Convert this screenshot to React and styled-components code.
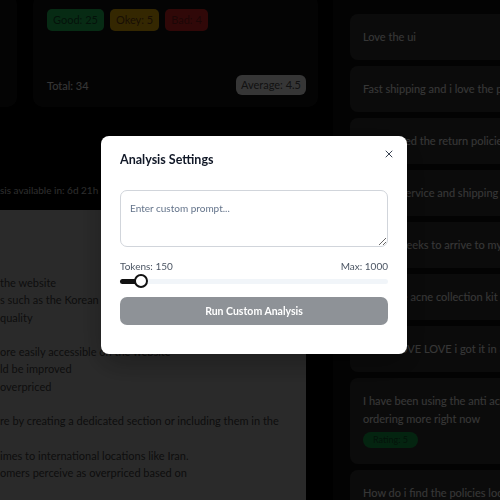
import React from 'react';
import styled, { createGlobalStyle } from 'styled-components';
import { X } from 'lucide-react';

const GlobalStyle = createGlobalStyle`
    html, body {
        margin: 0;
        padding: 0;
        background: #000;
    }
    body {
        font-family: Lato, "Noto Sans", sans-serif;
        overflow: hidden;
    }
`;

const Page = styled.div`
    display: flex;
    width: 500px;
    height: 500px;
    overflow: hidden;
    background: #000;
`;

const LeftColumn = styled.div`
    width: 333px;
    flex-shrink: 0;
    display: flex;
    flex-direction: column;
`;

const StatsRow = styled.div`
    display: flex;
    gap: 16px;
    margin-top: -5px;
    height: 112px;
    flex-shrink: 0;
`;

const Card = styled.div`
    background: #161616;
    border-radius: 10px;
    box-sizing: border-box;
`;

const SideCard = styled(Card)`
    width: 17px;
    border-radius: 0 10px 10px 0;
`;

const StatsCard = styled(Card)`
    width: 285px;
    padding: 14px 12px 12px 14px;
    display: flex;
    flex-direction: column;
    justify-content: space-between;
`;

const TagRow = styled.div`
    display: flex;
    gap: 6px;
`;

const tagColors = {
    good: ['#22c55e', '#14532d'],
    okey: ['#eab308', '#713f12'],
    bad: ['#dc2626', '#7f1d1d'],
};

const Tag = styled.span`
    height: 22px;
    line-height: 22px;
    padding: 0 6px;
    border-radius: 5px;
    font-size: 11px;
    background: ${p => tagColors[p.$kind][0]};
    color: ${p => tagColors[p.$kind][1]};
`;

const StatsFooter = styled.div`
    display: flex;
    justify-content: space-between;
    align-items: center;
`;

const Total = styled.span`
    font-size: 11px;
    color: #f5f5f5;
`;

const AverageBadge = styled.span`
    height: 20px;
    line-height: 20px;
    padding: 0 5px;
    border-radius: 6px;
    font-size: 11px;
    background: #f3f4f6;
    color: #525252;
`;

const NoticeRow = styled.div`
    height: 103px;
    box-sizing: border-box;
    display: flex;
    align-items: flex-end;
    padding-bottom: 13px;
    font-size: 10px;
    line-height: 14px;
    color: #cfcfcf;
    flex-shrink: 0;
`;

const ResultPanel = styled.div`
    width: 306px;
    flex: 1;
    background: #c0c0c0;
    border-top-right-radius: 10px;
    padding-top: 64px;
    box-sizing: border-box;
    font-size: 11px;
    line-height: 17.3px;
    color: #404040;
    white-space: nowrap;
    overflow: hidden;
`;

const ResultLine = styled.div`
    height: 17.3px;
`;

const RightColumn = styled.div`
    flex: 1;
    background: #101010;
    padding: 14px 0 0 17px;
    display: flex;
    flex-direction: column;
    gap: 6px;
    overflow: hidden;
`;

const ReviewCard = styled.div`
    flex-shrink: 0;
    width: 320px;
    box-sizing: border-box;
    padding: 14px 13px;
    border-radius: 8px;
    background: #333333;
    font-size: 11px;
    line-height: 18px;
    color: #fafafa;
    white-space: nowrap;
`;

const RatingBadge = styled.span`
    display: inline-block;
    margin: 4px 0 2px;
    height: 16px;
    line-height: 16px;
    padding: 0 10px;
    border-radius: 8px;
    font-size: 9px;
    background: #16a34a;
    color: #14532d;
`;

const Overlay = styled.div`
    position: fixed;
    inset: 0;
    background: rgba(0, 0, 0, 0.78);
    display: flex;
    align-items: center;
    justify-content: center;
    padding: 0 0 10px 8px;
    box-sizing: border-box;
`;

const Modal = styled.div`
    position: relative;
    width: 306px;
    box-sizing: border-box;
    padding: 16px 19px 29px;
    background: #fff;
    border-radius: 8px;
    box-shadow: 0 10px 30px rgba(0, 0, 0, .3);
`;

const CloseButton = styled.button`
    position: absolute;
    top: 12px;
    right: 12px;
    width: 12px;
    height: 12px;
    padding: 0;
    border: none;
    background: none;
    color: #374151;
    display: flex;
    cursor: pointer;
`;

const Title = styled.h2`
    margin: 0 0 22px;
    font-size: 12.5px;
    line-height: 16px;
    font-weight: 700;
    color: #111827;
`;

const PromptInput = styled.textarea`
    display: block;
    width: 100%;
    height: 57px;
    box-sizing: border-box;
    margin: 0 0 12px;
    padding: 10px 9px;
    border: 1px solid #d1d5db;
    border-radius: 7px;
    font-family: Lato, "Noto Sans", sans-serif;
    font-size: 10px;
    line-height: 14px;
    color: #111827;
    resize: vertical;
    outline: none;
    &::placeholder {
        color: #64748b;
    }
`;

const LabelRow = styled.div`
    display: flex;
    justify-content: space-between;
    font-size: 10px;
    line-height: 14px;
    color: #4b5563;
    margin-bottom: 1px;
`;

const TokenSlider = styled.input`
    display: block;
    width: 100%;
    height: 14px;
    margin: 0 0 9px;
    padding: 0;
    -webkit-appearance: none;
    appearance: none;
    background: transparent;
    &::-webkit-slider-runnable-track {
        height: 5px;
        border-radius: 3px;
        background: linear-gradient(to right, #111 0, #111 ${p => p.$fill}%, #f1f5f9 ${p => p.$fill}%, #f1f5f9 100%);
    }
    &::-webkit-slider-thumb {
        -webkit-appearance: none;
        width: 14px;
        height: 14px;
        margin-top: -4.5px;
        border-radius: 50%;
        border: 2px solid #111;
        background: #fff;
        box-sizing: border-box;
    }
`;

const RunButton = styled.button`
    display: block;
    width: 100%;
    height: 28px;
    border: none;
    border-radius: 7px;
    background: #8e9297;
    color: #fff;
    font-family: Lato, "Noto Sans", sans-serif;
    font-size: 10.5px;
    font-weight: 700;
`;

const resultLines = [
    'the website',
    's such as the Korean',
    'quality',
    '',
    'ore easily accessible on the website',
    'ld be improved',
    'overpriced',
    '',
    're by creating a dedicated section or including them in the',
    '',
    'imes to international locations like Iran.',
    'omers perceive as overpriced based on',
];

const reviews = [
    'Love the ui',
    'Fast shipping and i love the products',
    'I also loved the return policies',
    'Perfect service and shipping',
    'Took 2 weeks to arrive to my home',
    'I love the acne collection kit',
    'LOVE LOVE LOVE i got it in 3 days',
];

const App = () => {
    const tokens = 150;
    const min = 100;
    const max = 1000;
    const fill = 7.8;

    return (
        <>
            <GlobalStyle/>
            <Page>
                <LeftColumn>
                    <StatsRow>
                        <SideCard/>
                        <StatsCard>
                            <TagRow>
                                <Tag $kind="good">Good: 25</Tag>
                                <Tag $kind="okey">Okey: 5</Tag>
                                <Tag $kind="bad">Bad: 4</Tag>
                            </TagRow>
                            <StatsFooter>
                                <Total>Total: 34</Total>
                                <AverageBadge>Average: 4.5</AverageBadge>
                            </StatsFooter>
                        </StatsCard>
                    </StatsRow>
                    <NoticeRow>sis available in: 6d 21h</NoticeRow>
                    <ResultPanel>
                        {resultLines.map((line, i) => (
                            <ResultLine key={i}>{line}</ResultLine>
                        ))}
                    </ResultPanel>
                </LeftColumn>
                <RightColumn>
                    {reviews.map(text => (
                        <ReviewCard key={text}>{text}</ReviewCard>
                    ))}
                    <ReviewCard>
                        I have been using the anti acne serum for weeks and i am
                        <br/>
                        ordering more right now
                        <br/>
                        <RatingBadge>Rating: 5</RatingBadge>
                    </ReviewCard>
                    <ReviewCard>How do i find the policies location?</ReviewCard>
                </RightColumn>
            </Page>
            <Overlay>
                <Modal>
                    <CloseButton aria-label="Close">
                        <X size={12} strokeWidth={2}/>
                    </CloseButton>
                    <Title>Analysis Settings</Title>
                    <PromptInput placeholder="Enter custom prompt..."/>
                    <LabelRow>
                        <span>Tokens: {tokens}</span>
                        <span>Max: {max}</span>
                    </LabelRow>
                    <TokenSlider type="range" min={min} max={max} defaultValue={tokens} $fill={fill}/>
                    <RunButton>Run Custom Analysis</RunButton>
                </Modal>
            </Overlay>
        </>
    );
};

export default App;
